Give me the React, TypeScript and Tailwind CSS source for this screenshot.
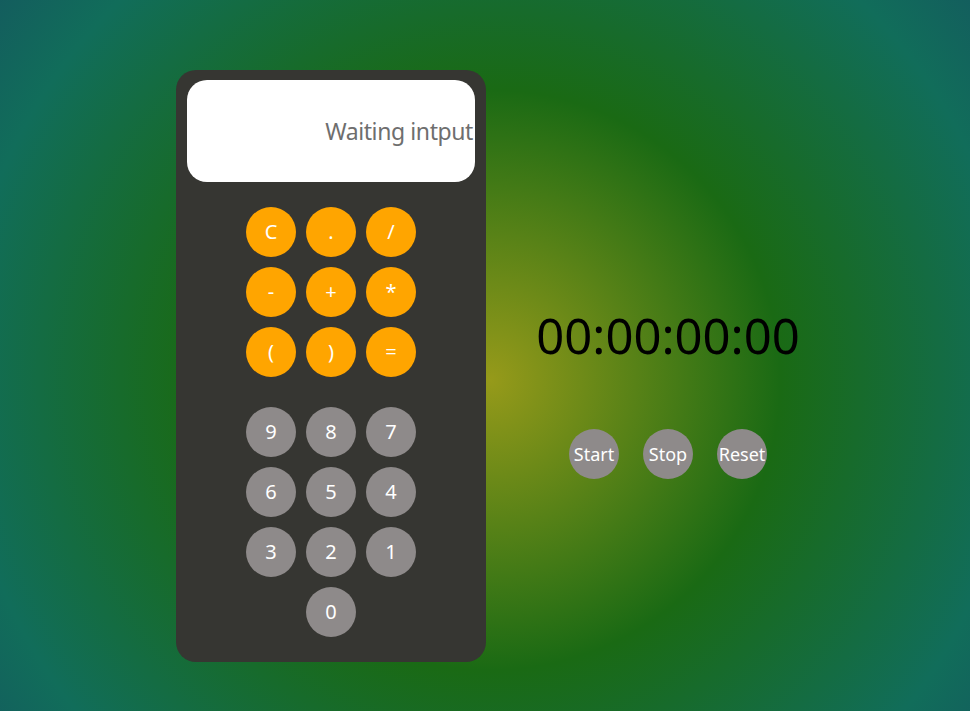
import React from "react";

const ops = ["C", ".", "/", "-", "+", "*", "(", ")", "="];
const nums = ["9", "8", "7", "6", "5", "4", "3", "2", "1"];

function RoundButton({ label, className }: { label: string; className: string }) {
  return (
    <button
      className={`w-[50px] h-[50px] rounded-full flex items-center justify-center text-white text-[20px] leading-none ${className}`}
    >
      {label}
    </button>
  );
}

export default function App() {
  return (
    <div
      className="w-full h-[711px] overflow-hidden flex items-start bg-[radial-gradient(circle_at_490px_380px,#969a1a_0px,#1a6a14_290px,#116d5a_530px,#14585f_650px)] font-['Noto_Sans',sans-serif]"
    >
      {/* Calculator */}
      <div className="ml-[176px] mt-[70px] w-[310px] bg-[#363632] rounded-[20px] px-[11px] pt-[10px] pb-[25px] flex flex-col items-center">
        <div className="w-full h-[102px] bg-white rounded-[20px] flex items-center justify-end pr-[2px] overflow-hidden">
          <span className="text-[23px] tracking-[-0.4px] text-[#6e6e6e] whitespace-nowrap">
            Waiting intput
          </span>
        </div>

        <div className="mt-[25px] grid grid-cols-3 gap-[10px]">
          {ops.map((op) => (
            <RoundButton key={op} label={op} className="bg-[#ffa500]" />
          ))}
        </div>

        <div className="mt-[30px] grid grid-cols-3 gap-[10px]">
          {nums.map((n) => (
            <RoundButton key={n} label={n} className="bg-[#8e8a8a]" />
          ))}
          <div />
          <RoundButton label="0" className="bg-[#8e8a8a]" />
        </div>
      </div>

      {/* Timer */}
      <div className="ml-[32px] mt-[307px] w-[300px] flex flex-col items-center">
        <div className="text-[49px] leading-[56px] text-black">00:00:00:00</div>
        <div className="mt-[66px] flex gap-[24px]">
          {["Start", "Stop", "Reset"].map((t) => (
            <button
              key={t}
              className="w-[50px] h-[50px] rounded-full bg-[#8e8a8a] text-white text-[18px] leading-none flex items-center justify-center whitespace-nowrap"
            >
              {t}
            </button>
          ))}
        </div>
      </div>
    </div>
  );
}
